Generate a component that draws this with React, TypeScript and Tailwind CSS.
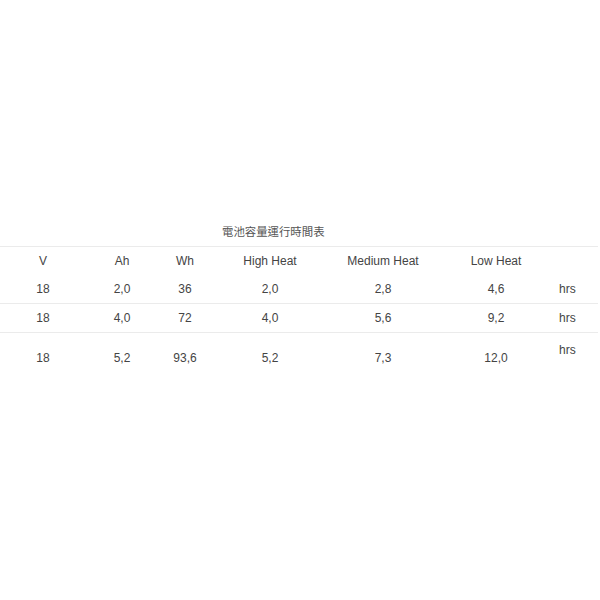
import React from 'react';

const rows = [
  ['18', '2,0', '36', '2,0', '2,8', '4,6'],
  ['18', '4,0', '72', '4,0', '5,6', '9,2'],
];

const App: React.FC = () => {
  return (
    <div
      className="w-[600px] h-[600px] bg-white text-[12px] text-[#444] pt-[224px]"
      style={{ fontFamily: '"Liberation Sans", Arial, "Noto Sans CJK TC", sans-serif' }}
    >
      <div className="pl-[222px] h-[22px] leading-[17px] text-[11.4px] text-[#555]">電池容量運行時間表</div>
      <table className="w-[598px] table-fixed border-collapse">
        <colgroup>
          <col className="w-[86px]" />
          <col className="w-[72px]" />
          <col className="w-[54px]" />
          <col className="w-[116px]" />
          <col className="w-[110px]" />
          <col className="w-[116px]" />
          <col className="w-[44px]" />
        </colgroup>
        <tbody>
          <tr className="h-[29px] border-t border-[#ebebeb]">
            <td className="text-center">V</td>
            <td className="text-center">Ah</td>
            <td className="text-center">Wh</td>
            <td className="text-center">High Heat</td>
            <td className="text-center">Medium Heat</td>
            <td className="text-center">Low Heat</td>
            <td></td>
          </tr>
          {rows.map((r, i) => (
            <tr key={i} className={i === 0 ? 'h-[28px]' : 'h-[29px] border-t border-[#ebebeb]'}>
              {r.map((c, j) => (
                <td key={j} className="text-center">{c}</td>
              ))}
              <td className="pl-[5px]">hrs</td>
            </tr>
          ))}
          <tr className="h-[50px] border-t border-[#ebebeb]">
            <td className="text-center">18</td>
            <td className="text-center">5,2</td>
            <td className="text-center">93,6</td>
            <td className="text-center">5,2</td>
            <td className="text-center">7,3</td>
            <td className="text-center">12,0</td>
            <td className="pl-[5px] align-top pt-[8px]">hrs</td>
          </tr>
        </tbody>
      </table>
    </div>
  );
};

export default App;
